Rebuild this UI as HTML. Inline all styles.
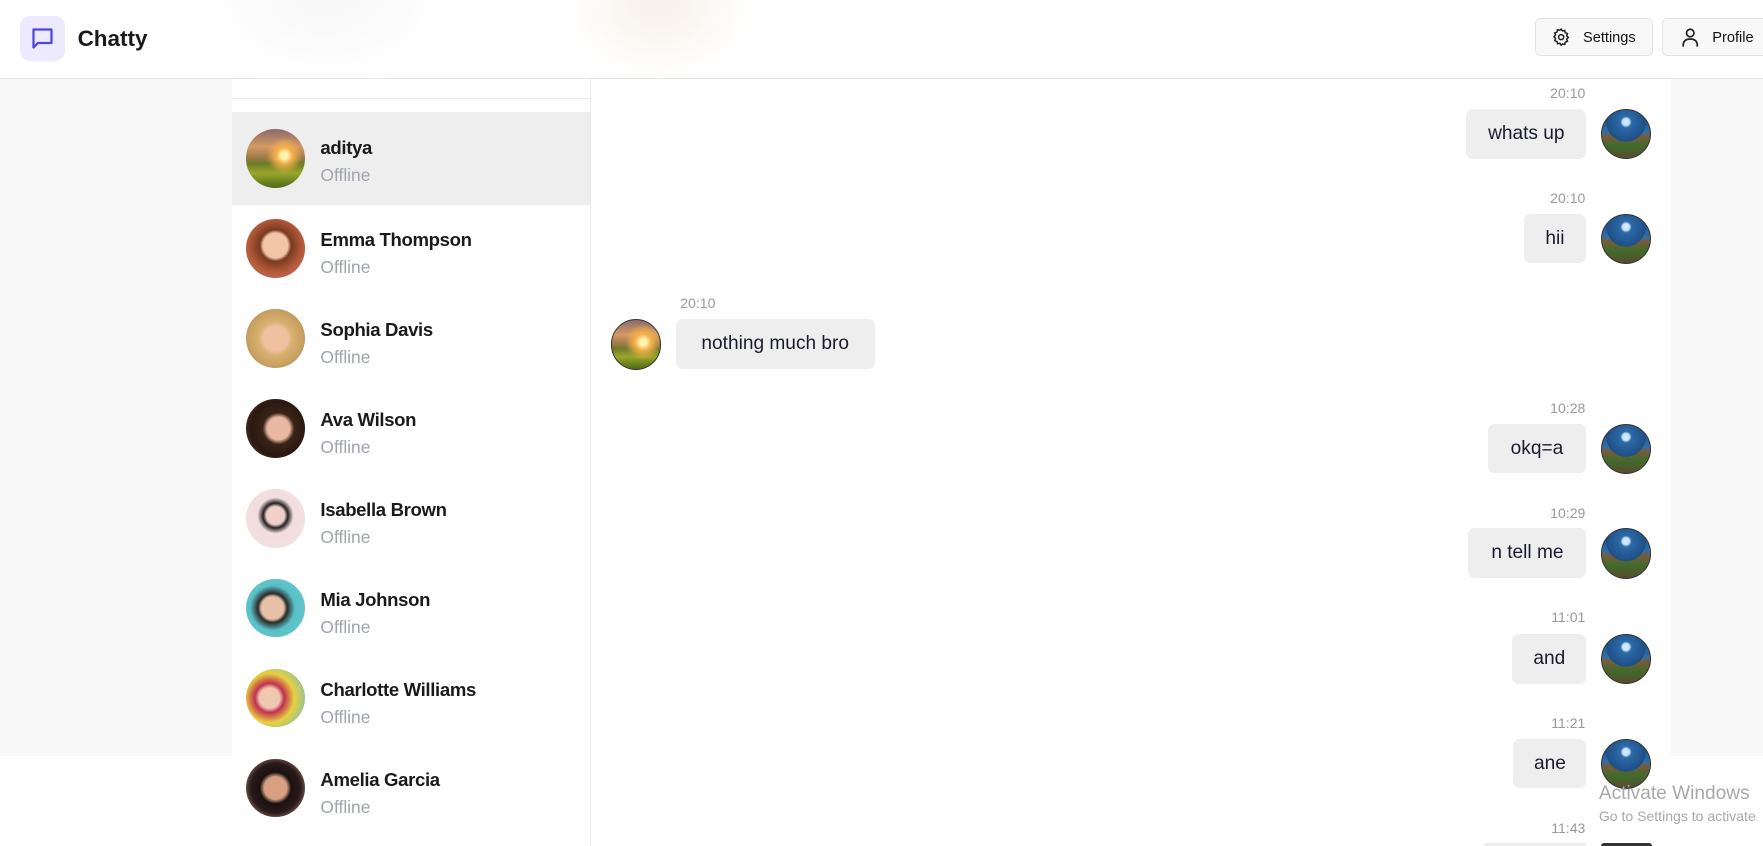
<!DOCTYPE html>
<html><head><meta charset="utf-8"><style>
html,body{margin:0;padding:0;overflow:hidden}
body{width:1568px;height:752px;zoom:1.12436;position:relative;font-family:"Liberation Sans",sans-serif;background:#fff;color:#111;overflow:hidden}
.abs{position:absolute}
.hdr{left:0;top:0;width:1568px;height:69px;border-bottom:1px solid #e5e5e5;background:#fff}
.logo{left:18px;top:14px;width:40px;height:40px;background:#ede9fe;border-radius:9px}
.btn{top:16px;height:34px;border:1px solid #e3e3e3;background:#f8f8f8;border-radius:5px;font-size:13px;display:flex;align-items:center;box-sizing:border-box}
.row{left:206px;width:319px;height:80px}
.av{position:absolute;left:13px;top:15px;width:52px;height:52px;border-radius:50%}
.nm{position:absolute;left:79px;top:22px;font-size:16.5px;font-weight:bold;color:#1a1a1a;letter-spacing:-0.3px}
.st{position:absolute;left:79px;top:47px;font-size:15.5px;color:#a0a4ab}
.t{font-size:12.5px;color:#999;text-align:right}
.b{height:44px;background:#eeeeee;border-radius:6px;font-size:17px;line-height:44px;text-align:center;color:#1a1a2e}
.ma{width:43px;height:43px;border-radius:50%;border:1px solid #333;background:radial-gradient(circle at 50% 25%,#cfe6ff 0 3px,#2c6aa8 5px,#1e4f86 45%,transparent 46%),linear-gradient(180deg,#1b3f6b 0,#2f6fa8 45%,#7a5a3a 55%,#3f6b2a 75%,#5a4a30 100%)}
.sun{background:radial-gradient(circle at 65% 45%,#fff3b0 0 3px,#f6b24a 7px,transparent 16px),linear-gradient(180deg,#8a6a6a 0,#d49a62 30%,#a07a4a 48%,#6e7a2a 58%,#9aa62a 75%,#4e6a18 100%)}
</style></head><body>
<div class="abs" style="left:0;top:70px;width:206px;height:602px;background:#f8f8f8"></div>
<div class="abs" style="left:1486px;top:70px;width:82px;height:602px;background:#f8f8f8"></div>
<div class="abs hdr"></div>
<div class="abs" style="left:210px;top:-40px;width:160px;height:80px;border-radius:50%;background:#f8f8f8;filter:blur(25px)"></div>
<div class="abs" style="left:530px;top:-30px;width:110px;height:70px;border-radius:50%;background:#f7f1ea;filter:blur(22px)"></div>
<div class="abs logo"><svg width="40" height="40" viewBox="0 0 40 40"><path d="M12 12h16v12H16l-4 4z" fill="none" stroke="#4f46e5" stroke-width="2" stroke-linejoin="round"/></svg></div>
<div class="abs" style="left:69px;top:23px;font-size:20px;font-weight:bold;color:#1a1a1a">Chatty</div>
<div class="abs btn" style="left:1365px;width:105px"><svg style="margin-left:14px" width="18" height="18" viewBox="0 0 24 24" fill="none" stroke="#222" stroke-width="1.8"><circle cx="12" cy="12" r="3"/><path d="M12 2.5l1.6 2.2 2.7-.6.6 2.7 2.6 1-.9 2.6 1.9 2-1.9 2 .9 2.6-2.6 1-.6 2.7-2.7-.6L12 21.5l-1.6-2.2-2.7.6-.6-2.7-2.6-1 .9-2.6L3.5 11.6l1.9-2-.9-2.6 2.6-1 .6-2.7 2.7.6z"/></svg><span style="margin-left:10px;margin-top:2px">Settings</span></div>
<div class="abs btn" style="left:1478px;width:100px"><svg style="margin-left:14px" width="20" height="20" viewBox="0 0 24 24" fill="none" stroke="#222" stroke-width="1.8"><circle cx="12" cy="7.5" r="4"/><path d="M4.5 22v-2a6 6 0 0 1 6-6h3a6 6 0 0 1 6 6v2"/></svg><span style="margin-left:10px;margin-top:2px">Profile</span></div>

<div class="abs" style="left:206px;top:70px;width:319px;height:682px;background:#fff;border-right:1px solid #e8e8e8"></div>
<div class="abs" style="left:206px;top:87px;width:319px;height:1px;background:#ececec"></div>
<div class="abs row" style="top:100px;height:82px;background:#eeeeee"><div class="av sun"></div><div class="nm">aditya</div><div class="st">Offline</div></div>
<div class="abs row" style="top:182px"><div class="av" style="top:13px;background:radial-gradient(circle at 50% 45%,#f2c4a8 0 11px,#7a3a20 14px,#b45a3a 24px,#d27878 100%)"></div><div class="nm">Emma Thompson</div><div class="st">Offline</div></div>
<div class="abs row" style="top:262px"><div class="av" style="top:13px;background:radial-gradient(circle at 50% 50%,#f0c0a0 0 11px,#d8b070 15px,#c8a060 24px,#9a8a6a 100%)"></div><div class="nm">Sophia Davis</div><div class="st">Offline</div></div>
<div class="abs row" style="top:342px"><div class="av" style="top:13px;background:radial-gradient(circle at 55% 50%,#e8b8a0 0 10px,#3a2418 14px,#2a1810 24px,#5a4a40 100%)"></div><div class="nm">Ava Wilson</div><div class="st">Offline</div></div>
<div class="abs row" style="top:422px"><div class="av" style="top:13px;background:radial-gradient(circle at 50% 45%,#f0d0c8 0 8px,#222 11px,#f2dede 16px,#f2e0e2 100%)"></div><div class="nm">Isabella Brown</div><div class="st">Offline</div></div>
<div class="abs row" style="top:502px"><div class="av" style="top:13px;background:radial-gradient(circle at 45% 50%,#e8c0a8 0 10px,#2a2a2a 13px,#5ac0c8 20px,#6ac8d0 100%)"></div><div class="nm">Mia Johnson</div><div class="st">Offline</div></div>
<div class="abs row" style="top:582px"><div class="av" style="top:13px;background:radial-gradient(circle at 40% 50%,#f0c8b0 0 9px,#c03050 13px,#e8d040 22px,#50b8d8 100%)"></div><div class="nm">Charlotte Williams</div><div class="st">Offline</div></div>
<div class="abs row" style="top:662px"><div class="av" style="top:13px;background:radial-gradient(circle at 50% 50%,#d8a080 0 10px,#1a1010 14px,#2a1a1a 22px,#e8b8b8 100%)"></div><div class="nm">Amelia Garcia</div><div class="st">Offline</div></div>

<div class="abs t" style="left:1300px;width:110px;top:76px">20:10</div>
<div class="abs b" style="left:1304px;width:107px;top:97px">whats up</div>
<div class="abs ma" style="left:1424px;top:97px"></div>
<div class="abs t" style="left:1300px;width:110px;top:169px">20:10</div>
<div class="abs b" style="left:1355px;width:56px;top:190px">hii</div>
<div class="abs ma" style="left:1424px;top:190px"></div>
<div class="abs t" style="left:605px;width:60px;top:262px;text-align:left">20:10</div>
<div class="abs b" style="left:601px;width:177px;top:284px">nothing much bro</div>
<div class="abs ma sun" style="left:543px;top:284px"></div>
<div class="abs t" style="left:1300px;width:110px;top:356px">10:28</div>
<div class="abs b" style="left:1323px;width:88px;top:377px">okq=a</div>
<div class="abs ma" style="left:1424px;top:377px"></div>
<div class="abs t" style="left:1300px;width:110px;top:449px">10:29</div>
<div class="abs b" style="left:1306px;width:105px;top:470px">n tell me</div>
<div class="abs ma" style="left:1424px;top:470px"></div>
<div class="abs t" style="left:1300px;width:110px;top:542px">11:01</div>
<div class="abs b" style="left:1345px;width:66px;top:564px">and</div>
<div class="abs ma" style="left:1424px;top:564px"></div>
<div class="abs t" style="left:1300px;width:110px;top:636px">11:21</div>
<div class="abs b" style="left:1346px;width:65px;top:657px">ane</div>
<div class="abs ma" style="left:1424px;top:657px"></div>
<div class="abs t" style="left:1300px;width:110px;top:729px">11:43</div>
<div class="abs b" style="left:1320px;width:91px;top:750px;height:2px"></div>
<div class="abs" style="left:1424px;top:750px;width:45px;height:2px;background:#333;border-radius:20px 20px 0 0"></div>

<div class="abs" style="left:1422px;top:696px;font-size:17px;color:#a8a8a8;white-space:nowrap">Activate Windows</div>
<div class="abs" style="left:1422px;top:719px;font-size:12.5px;color:#a8a8a8;white-space:nowrap">Go to Settings to activate</div>
</body></html>
